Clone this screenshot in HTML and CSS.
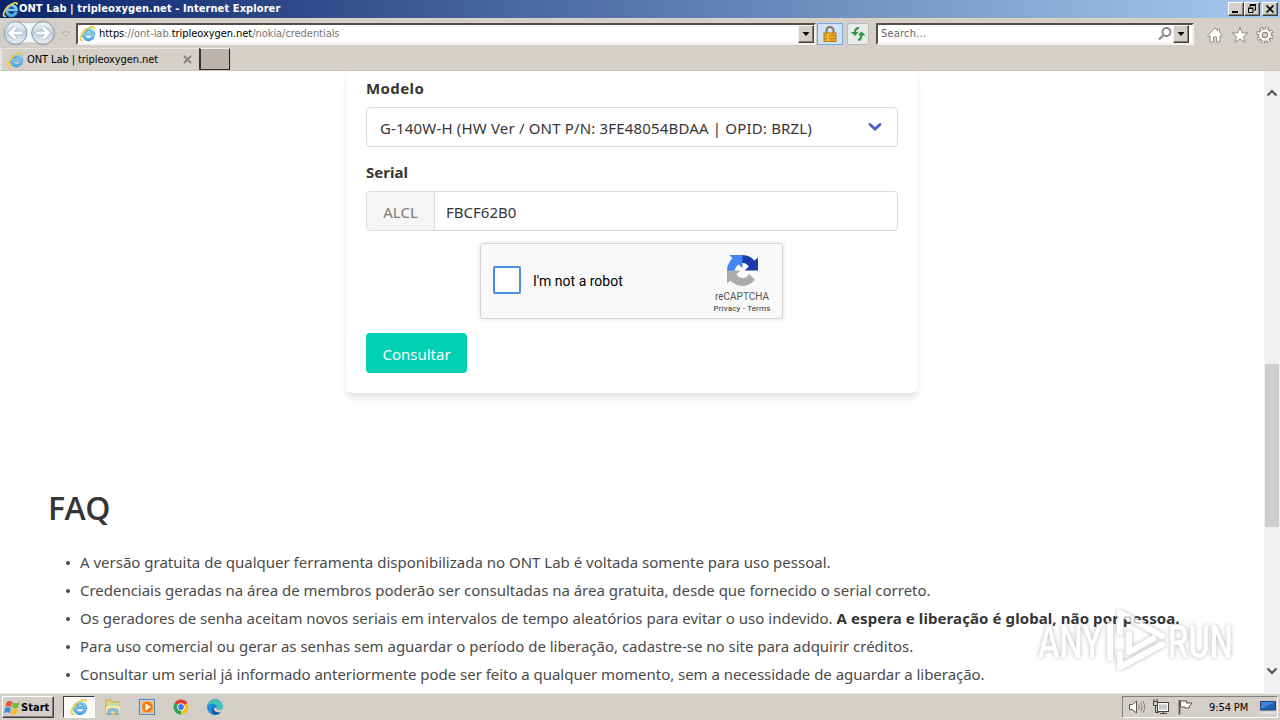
FILE: index.html
```html
<!DOCTYPE html>
<html lang="pt-BR">
<head>
<meta charset="utf-8">
<title>ONT Lab | tripleoxygen.net</title>
<link rel="stylesheet" href="styles.css">
</head>
<body>
<svg class="defs" width="0" height="0" aria-hidden="true">
  <linearGradient id="blue" x1="0" y1="0" x2="0" y2="1"><stop offset="0" stop-color="#8fdcfb"/><stop offset="1" stop-color="#4fb0ea"/></linearGradient>
  <linearGradient id="disc" x1="0" y1="0" x2="0" y2="1"><stop offset="0" stop-color="#f4f7fa"/><stop offset=".5" stop-color="#c3cfdb"/><stop offset="1" stop-color="#e6eff6"/></linearGradient>
  <symbol id="ie" viewBox="0 0 18 18">
    <path d="M15.200 11.800A5.300 5.300 0 1 1 15.400 9.500H6.500" fill="none" stroke="#4a9ad2" stroke-width="3.300"/>
    <path d="M14.900 11.800A5.300 5.300 0 1 1 15.400 9.500H6" fill="none" stroke="url(#blue)" stroke-width="2.200"/>
    <path d="M4 16.200C0 17 1 11.500 5.500 6.700S16.800 0 16 4" fill="none" stroke="#d3a72c" stroke-width="1.700"/>
    <path d="M4 16.200C0 17 1 11.500 5.500 6.700S16.800 0 16 4" fill="none" stroke="#fbdb50" stroke-width="1.200"/>
  </symbol>
</svg>

<header class="titlebar">
  <svg class="title-ie" viewBox="0 0 18 18"><use href="#ie"/></svg>
  <span class="title-text">ONT Lab | tripleoxygen.net - Internet Explorer</span>
  <div class="win-buttons">
    <span class="wb"><svg viewBox="0 0 14 12"><path d="M3 9h6" stroke="#000" stroke-width="2"/></svg></span>
    <span class="wb"><svg viewBox="0 0 14 12"><path d="M5 2.500h5.500V7H9M5 2v2M3.500 9.500h4.500v-4h-4.500zM3 5h5.500" fill="none" stroke="#000"/><path d="M5 1.500h6" stroke="#000"/></svg></span>
    <span class="wb gap"><svg viewBox="0 0 14 12"><path d="M3.500 2.500l7 7M10.500 2.500l-7 7" stroke="#000" stroke-width="1.700"/></svg></span>
  </div>
</header>

<nav class="navbar">
  <svg class="backfwd" width="74" height="29" viewBox="0 0 74 29">
    <path d="M15 1.500Q29 6 43 1.500A12 12 0 0 1 43 26Q29 22 15 26A12 12 0 0 1 15 1.500z" fill="#f5f6f7" stroke="#bdb9b4"/>
    <circle cx="15.500" cy="14" r="11.300" fill="url(#disc)" stroke="#8394a8"/>
    <circle cx="43" cy="14" r="11.300" fill="url(#disc)" stroke="#8394a8"/>
    <path d="M22 14H10.500M15.500 8.500L10 14l5.500 5.500" fill="none" stroke="#9fb0c2" stroke-width="4.400"/>
    <path d="M22 14H10.500M15.500 8.500L10 14l5.500 5.500" fill="none" stroke="#fff" stroke-width="3"/>
    <path d="M36.500 14H48M43 8.500l5.500 5.500-5.500 5.500" fill="none" stroke="#9fb0c2" stroke-width="4.400"/>
    <path d="M36.500 14H48M43 8.500l5.500 5.500-5.500 5.500" fill="none" stroke="#fff" stroke-width="3"/>
    <path d="M62 13h7.500L65.700 17.500z" fill="#e2deda" stroke="#aaa59f"/>
  </svg>
  <div class="address">
    <svg class="ie16" viewBox="0 0 18 18"><use href="#ie"/></svg>
    <span class="url"><b>https</b>://ont-lab.<b>tripleoxygen.net</b>/nokia/credentials</span>
    <span class="drop"><svg viewBox="0 0 14 16"><path d="M3.500 6h7L7 10z"/></svg></span>
  </div>
  <span class="tool lock"><svg viewBox="0 0 24 20"><path d="M8.500 9V6.500a3.500 3.500 0 0 1 7 0V9" fill="none" stroke="#8a7650" stroke-width="2"/><rect x="6" y="9" width="12" height="8.500" fill="#eaa821" stroke="#b87911"/><path d="M6 11.500h12M6 14.500h12" stroke="#c98713"/><path d="M10 9.500v8" stroke="#ffd768"/></svg></span>
  <span class="tool refresh"><svg viewBox="0 0 20 20"><path d="M11 4Q7 4 7 8.500" fill="none" stroke="#299338" stroke-width="2"/><path d="M3 8h7.500L7 12z" fill="#299338"/><path d="M10 16Q13.500 15.500 13.500 11" fill="none" stroke="#299338" stroke-width="2"/><path d="M10 11.500h7.500L13.500 7.500z" fill="#299338"/></svg></span>
  <div class="search">
    <span class="search-text">Search...</span>
    <svg class="magnifier" viewBox="0 0 16 16"><circle cx="9.500" cy="6" r="4" fill="none" stroke="#858585" stroke-width="1.800"/><path d="M6.500 9L2 13.500" stroke="#858585" stroke-width="2.200"/></svg>
    <span class="drop"><svg viewBox="0 0 14 16"><path d="M3.500 6h7L7 10z"/></svg></span>
  </div>
  <div class="nav-icons">
    <svg viewBox="0 0 18 18"><path d="M1.500 9.500L9 2l2.500 2.500V3h2v3.500l3 3-1.300 1L14 9.500V16h-3.500v-5h-3v5H4V9.500l-1.300 1z" fill="#fff" stroke="#908b87"/></svg>
    <svg viewBox="0 0 18 18"><path d="M9 1.300l2.100 5.500 5.900.2-4.600 3.600 1.600 5.700L9 13l-5 3.300 1.600-5.700L1 7l5.900-.2z" fill="#fff" stroke="#908b87"/></svg>
    <svg viewBox="0 0 18 18"><circle cx="9" cy="9" r="6.800" fill="none" stroke="#86817d" stroke-width="3.600" stroke-dasharray="3.440 1.900"/><circle cx="9" cy="9" r="4.500" fill="none" stroke="#86817d" stroke-width="4.400"/><circle cx="9" cy="9" r="6.800" fill="none" stroke="#fff" stroke-width="2" stroke-dasharray="1.800 3.540" stroke-dashoffset="-.8"/><circle cx="9" cy="9" r="4.500" fill="none" stroke="#fff" stroke-width="2.600"/></svg>
  </div>
</nav>

<div class="tabs">
  <div class="tab">
    <svg class="ie16" viewBox="0 0 18 18"><use href="#ie"/></svg>
    <span class="tab-text">ONT Lab | tripleoxygen.net</span>
    <svg class="tab-close" viewBox="0 0 9 9"><path d="M1 1l7 7M8 1L1 8" stroke="#85807c" stroke-width="1.800"/></svg>
  </div>
  <div class="newtab"></div>
</div>

<div class="viewport">
  <main class="page">
    <form class="card">
      <label class="label modelo">Modelo</label>
      <div class="field select">
        <span class="select-text">G-140W-H (HW Ver / ONT P/N: 3FE48054BDAA | OPID: BRZL)</span>
        <svg class="chev" viewBox="0 0 14 10"><path d="M2 2.500l5 4.500 5-4.500" fill="none" stroke="#485fc7" stroke-width="2.800" stroke-linecap="round"/></svg>
      </div>
      <label class="label serial">Serial</label>
      <div class="field addon">
        <span class="prefix">ALCL</span>
        <span class="value">FBCF62B0</span>
      </div>
      <div class="captcha">
        <span class="box"></span>
        <span class="robot">I'm not a robot</span>
        <div class="brand">
          <svg viewBox="0 0 64 64"><path d="M64 31.955a33 33 0 0 0-.033-1.370V4.687l-7.160 7.160C50.948 4.674 42.033.093 32.050.093c-10.400 0-19.622 4.960-25.458 12.640l11.736 11.860a15.550 15.550 0 0 1 4.754-5.334c2.050-1.600 4.952-2.906 8.968-2.906.485 0 .860.057 1.135.163 4.976.393 9.288 3.140 11.828 7.124l-8.307 8.307L64 31.953" fill="#1c3aa9"/><path d="M31.862.094a33 33 0 0 0-1.370.033H4.594l7.160 7.160C4.580 13.147 0 22.060 0 32.046c0 10.400 4.960 19.622 12.640 25.458L24.500 45.768a15.550 15.550 0 0 1-5.334-4.754c-1.600-2.050-2.906-4.952-2.906-8.968 0-.485.057-.860.163-1.135.393-4.976 3.140-9.288 7.124-11.828l8.307 8.307L31.860.095" fill="#4285f4"/><path d="M.001 32.045a33 33 0 0 0 .033 1.370v25.898l7.160-7.160c5.860 7.173 14.774 11.754 24.760 11.754 10.400 0 19.622-4.960 25.458-12.640l-11.736-11.860a15.550 15.550 0 0 1-4.754 5.334c-2.050 1.600-4.952 2.906-8.968 2.906-.485 0-.860-.057-1.135-.163-4.976-.393-9.288-3.140-11.828-7.124l8.307-8.307L0 32.046" fill="#ababab"/></svg>
          <span class="rc-name">reCAPTCHA</span>
          <span class="rc-links">Privacy - Terms</span>
        </div>
      </div>
      <button type="button" class="submit">Consultar</button>
    </form>
    <section class="faq">
      <h1>FAQ</h1>
      <ul>
        <li><span class="l1">A versão gratuita de qualquer ferramenta disponibilizada no ONT Lab é voltada somente para uso pessoal.</span></li>
        <li><span class="l2">Credenciais geradas na área de membros poderão ser consultadas na área gratuita, desde que fornecido o serial correto.</span></li>
        <li><span class="l3">Os geradores de senha aceitam novos seriais em intervalos de tempo aleatórios para evitar o uso indevido. <strong>A espera e liberação é global, não por pessoa.</strong></span></li>
        <li><span class="l4">Para uso comercial ou gerar as senhas sem aguardar o período de liberação, cadastre-se no site para adquirir créditos.</span></li>
        <li><span class="l5">Consultar um serial já informado anteriormente pode ser feito a qualquer momento, sem a necessidade de aguardar a liberação.</span></li>
      </ul>
    </section>
  </main>
  <div class="scrollbar">
    <svg class="up" viewBox="0 0 12 8"><path d="M1.500 6.500L6 2l4.500 4.500" fill="none" stroke="#555" stroke-width="2.200"/></svg>
    <div class="thumb"></div>
    <svg class="down" viewBox="0 0 12 8"><path d="M1.500 1.500L6 6l4.500-4.500" fill="none" stroke="#555" stroke-width="2.200"/></svg>
  </div>
  <svg class="watermark" viewBox="0 0 200 68">
    <text x="2" y="52" textLength="64" lengthAdjust="spacingAndGlyphs">ANY</text>
    <text x="132" y="52" textLength="65" lengthAdjust="spacingAndGlyphs">RUN</text>
    <path d="M74 18v34M84 26V7l42 23M93 28v18l24-13.500M84 48v13l42-22.500" fill="none" stroke="#fff" stroke-width="6" stroke-linejoin="round" stroke-linecap="round"/>
  </svg>
</div>

<footer class="taskbar">
  <div class="start">
    <svg viewBox="0 0 18 18"><path d="M3 3q3-2 6 0L7.500 8.500q-3-2-6 0z" fill="#e8562a"/><path d="M10 3.500q3 2 6.500 0L15 9q-3.500 2-6.500 0z" fill="#79b93c"/><path d="M1.300 9.500q3-2 6 0L6 15q-3-2-6 0z" fill="#3f8fd8"/><path d="M8.300 10q3 2 6.500 0l-1.500 5.500q-3.500 2-6.300 0z" fill="#f7bd2c"/></svg>
    <span>Start</span>
  </div>
  <div class="task-active"><svg viewBox="0 0 18 18"><use href="#ie"/></svg></div>
  <svg class="task" viewBox="0 0 18 18"><path d="M2 2h5l1 2h7v12H2z" fill="#efd27a" stroke="#cda846"/><path d="M4 5h11v4H4z" fill="#bfe0a8"/><path d="M2 8h14v7H2z" fill="#f8e6a0"/><path d="M4 16.500v-5q5-2 10 0v5h-2.500V13h-5v3.500z" fill="#8cc5e6" stroke="#5d9cc4" stroke-width=".7"/></svg>
  <svg class="task" viewBox="0 0 18 18"><rect x="1.500" y="1.500" width="15" height="15" fill="#b7d7ef" stroke="#5686b0"/><rect x="4" y="3" width="11" height="12" fill="#f9b45c"/><circle cx="9.500" cy="9" r="5.300" fill="#f47b12"/><path d="M7.500 5.500v7l5.500-3.500z" fill="#fff"/></svg>
  <svg class="task" viewBox="0 0 18 18"><path d="M9 9L2.500 5.300A7.500 7.500 0 0 1 15.500 5.300z" fill="#e33b2e"/><path d="M9 9l6.500-3.700A7.500 7.500 0 0 1 9 16.500z" fill="#fbc116"/><path d="M9 9v7.500A7.500 7.500 0 0 1 2.500 5.300z" fill="#2ba24c"/><circle cx="9" cy="9" r="3.800" fill="#fff"/><circle cx="9" cy="9" r="2.900" fill="#3b7ded"/></svg>
  <svg class="task" viewBox="0 0 18 18"><circle cx="9" cy="9" r="7.800" fill="#1573c8"/><path d="M1.300 8A7.800 7.800 0 0 1 16.800 9q0 3-3.800 3-3 0-2.500-2.500Q10.500 6 6.500 6 3 6 1.300 8z" fill="#3fc7b4"/><path d="M1.300 8Q3 5.500 7 5.700q4 .5 4 3.800Q8 7.500 6 10q-1 4 4 6.700Q2 17 1.300 8z" fill="#1b8fdf"/><path d="M10.500 9.500Q10 12 13 12q3.800 0 3.800-3l1 4-2.500 2Q9 16 7.500 11.500 8 9 10.500 9.500z" fill="#d4d0c8"/><path d="M7.500 10.500Q8 15 15 14.500 12.500 17 9 16.800 4.500 15.500 7.500 10.500z" fill="#14509c"/></svg>
  <div class="tray">
    <svg viewBox="0 0 18 18"><path d="M1.500 6.500h3L8.500 3v12l-4-3.500h-3z" fill="#fff" stroke="#555"/><path d="M10.500 6.500q2 2.500 0 5M12.700 4.800q3 4.200 0 8.400M14.800 3.200q4 5.800 0 11.600" fill="none" stroke="#777" stroke-width=".9"/></svg>
    <svg viewBox="0 0 18 18"><rect x="5.500" y="4.500" width="11" height="9" fill="#fff" stroke="#444"/><path d="M7 6.500h8v5H7z" fill="#c8c8c8"/><path d="M8 15.500h7M11.500 13.500V16M2 1v3M5 1v3M1.500 3.500h4v4h-4zM3.500 7.500v7H7" fill="none" stroke="#444"/></svg>
    <svg viewBox="0 0 18 18"><path d="M3.500 2v14.500" stroke="#555" stroke-width="1.800"/><path d="M4.500 3h6v2h5.500q-3 2.500-3 5H9V9H4.500z" fill="#fff" stroke="#555"/></svg>
    <span class="clock">9:54 PM</span>
    <svg class="desk" viewBox="0 0 18 18"><path d="M1.500 3.500h15v8.500h-15z" fill="#1e62b8" stroke="#183f78"/><path d="M2 4h14L2 11z" fill="#3f86d8"/><path d="M2 15h14" stroke="#dfe9f3" stroke-width="1.500"/></svg>
  </div>
</footer>
</body>
</html>
```

FILE: styles.css
```css
* { box-sizing: border-box; }
body { margin: 0; width: 1280px; height: 720px; overflow: hidden; display: flex; flex-direction: column; background: #d4d0c8; font-family: "DejaVu Sans Condensed", "DejaVu Sans", sans-serif; font-size: 11px; color: #000; }
svg { display: block; flex: none; }
.defs { position: absolute; }
span { white-space: nowrap; }

.titlebar { height: 18px; flex: none; display: flex; align-items: center; padding: 0 2px 0 2px; background: linear-gradient(90deg, #0a246a, #a6caf0); color: #fff; font-weight: bold; }
.title-ie { width: 17px; height: 17px; }
.title-text { letter-spacing: .09px; line-height: 18px; }
.win-buttons { display: flex; margin-left: auto; }
.wb { width: 16px; height: 14px; background: #d4d0c8; border: 1px solid; border-color: #fff #404040 #404040 #fff; box-shadow: inset -1px -1px #808080; }
.wb svg { width: 14px; height: 12px; }
.gap { margin-left: 2px; }

.navbar { height: 30px; flex: none; display: flex; align-items: center; background: #d5cfca; border-top: 1px solid #d8d4bf; }
.backfwd { margin-right: 2px; }
.address { width: 740px; height: 22px; display: flex; align-items: center; background: #fff; border: 2px solid; border-color: #55504c #f3f1ef #f3f1ef #55504c; }
.ie16 { width: 17px; height: 17px; }
.address .ie16 { margin-left: 1px; }
.url { color: #777; margin-left: 3px; letter-spacing: -.05px; }
.url b { font-weight: normal; color: #000; }
.drop { width: 16px; height: 18px; background: #d4d0c8; border: 1px solid; border-color: #f4f2ee #404040 #404040 #f4f2ee; box-shadow: inset -1px -1px #808080; }
.drop svg { width: 14px; height: 16px; }
.address .drop { margin-left: auto; }
.tool { height: 22px; border: 1px solid #b7b9bb; }
.lock { width: 26px; margin-left: 1px; background: #cfe2f7; border-color: #76a9df; }
.lock svg { width: 24px; height: 20px; }
.refresh { width: 22px; margin-left: 4px; background: #e9eaeb; border-radius: 2px; }
.search { width: 318px; height: 22px; margin-left: 7px; display: flex; align-items: center; background: #fff; border: 2px solid; border-color: #55504c #f3f1ef #f3f1ef #55504c; }
.search-text { color: #666; margin-left: 3px; letter-spacing: .2px; }
.magnifier { width: 16px; height: 16px; margin-left: auto; }
.search .drop { margin-right: 3px; }
.nav-icons { display: flex; gap: 7px; margin-left: 12px; padding-top: 3px; }
.nav-icons svg { width: 18px; height: 18px; }

.tabs { height: 23px; flex: none; display: flex; background: #d5cfca; border-bottom: 1px solid #cbc3bd; }
.tab { width: 198px; display: flex; align-items: center; padding-left: 5px; border-top: 1px solid #e7e3df; border-left: 2px solid #e7e3df; }
.tab-text { margin-left: 3px; letter-spacing: -.08px; }
.tab-close { width: 9px; height: 9px; margin-left: auto; margin-right: 6px; }
.newtab { width: 31px; height: 22px; margin-left: 1px; background: #bab3ae; border: 1px solid; border-width: 1px 1px 1px 2px; border-color: #f2efec #1c1c1c #2c2c2c #333; }

.viewport { position: relative; height: 622px; flex: none; display: flex; background: #fff; overflow: hidden; }
.page { width: 1264px; flex: none; overflow: hidden; font-family: "Noto Sans", sans-serif; color: #363636; font-size: 15px; }
.card { width: 572px; height: 322px; margin-left: 346px; padding: 5px 20px 0; background: #fff; border-radius: 0 0 6px 6px; box-shadow: 0 6px 6px -1px rgba(10,10,10,.1), 0 0 0 1px rgba(10,10,10,.02); }
.label { display: block; height: 24px; line-height: 24px; font-weight: 700; }
.modelo { letter-spacing: .4px; }
.serial { margin-top: 13px; letter-spacing: 0; }
.field { height: 40px; display: flex; align-items: center; border: 1px solid #dbdbdb; border-radius: 4px; margin-top: 7px; line-height: 40px; padding-top: 2px; }
.select { padding-left: 13px; padding-right: 15px; }
.select-text { letter-spacing: .17px; }
.chev { width: 14px; height: 10px; margin: -2px 0 0 auto; }
.addon { padding: 0; }
.prefix { width: 68px; height: 38px; text-align: center; background: #f5f5f5; color: #7a7a7a; border-right: 1px solid #dbdbdb; border-radius: 3px 0 0 3px; }
.value { margin-left: 11px; padding-top: 2px; }
.captcha { width: 303px; height: 76px; margin: 12px 0 0 114px; display: flex; align-items: center; background: #f9f9f9; border: 1px solid #d3d3d3; border-radius: 3px; box-shadow: 0 0 4px 1px rgba(0,0,0,.08); font-family: Roboto, sans-serif; color: #000; }
.box { width: 28px; height: 28px; margin: 0 12px; margin-top: -2px; background: #fff; border: 2px solid #4a90e2; border-radius: 2px; }
.robot { font-size: 14px; }
.brand { width: 70px; margin-left: auto; margin-right: 5px; display: flex; flex-direction: column; align-items: center; color: #555; }
.brand svg { width: 31px; height: 31px; margin-top: 7px; }
.rc-name { font-size: 10px; line-height: 12px; margin-top: 5px; }
.rc-links { font-size: 8px; line-height: 11px; color: #333; letter-spacing: .18px; }
.submit { display: block; width: 101px; height: 40px; margin-top: 14px; padding: 1px 0 0; border: 0; border-radius: 4px; background: #00d1b2; color: #fff; font: 15px "Noto Sans", sans-serif; }
.faq { padding-left: 48px; color: #4a4a4a; }
.faq h1 { margin: 93px 0 0; height: 44px; line-height: 44px; font-size: 32px; font-weight: 600; font-family: "Open Sans", sans-serif; letter-spacing: -.5px; color: #363636; }
.faq ul { margin: 18px 0 0; padding: 0; list-style: none; }
.faq li { height: 28px; line-height: 28px; display: flex; align-items: center; }
.faq li::before { content: ""; width: 4px; height: 4px; margin: 2px 10px 0 18px; border-radius: 50%; background: #4a4a4a; flex: none; }
.faq strong { color: #363636; letter-spacing: .09px; }
.l2 { letter-spacing: -.02px; }
.l4 { letter-spacing: -.015px; }
.l5 { letter-spacing: -.035px; }

.scrollbar { width: 16px; background: #f0f0f0; display: flex; flex-direction: column; align-items: center; }
.up, .down { width: 12px; height: 8px; }
.up { margin-top: 18px; }
.thumb { width: 14px; height: 163px; margin-top: 267px; background: #cdcdcd; }
.down { margin-top: 140px; }

.watermark { position: absolute; left: 1036px; top: 535px; width: 200px; height: 68px; opacity: .75; filter: drop-shadow(0 0 2px rgba(0,0,0,.38)); font: 500 46px Roboto, sans-serif; fill: #fff; }

.taskbar { height: 27px; flex: none; display: flex; align-items: center; padding: 0 2px; border-top: 1px solid #f2f0ec; background: #d4cec8; }
.start { width: 52px; height: 22px; display: flex; align-items: center; gap: 0; padding-left: 1px; font-weight: bold; border: 1px solid; border-color: #fff #404040 #404040 #fff; box-shadow: inset -1px -1px #808080; }
.start svg { width: 17px; height: 17px; }
.start span { letter-spacing: .05px; }
.task-active { width: 32px; height: 22px; margin-left: 9px; padding: 1px 6px; background: #fbfaf8; border: 1px solid; border-color: #404040 #fff #fff #404040; }
.task-active svg { width: 18px; height: 18px; }
.task { width: 18px; height: 18px; margin-left: 16px; }
.task-active + .task { margin-left: 9px; }
.tray { width: 156px; height: 22px; margin-left: auto; display: flex; align-items: center; gap: 6px; padding-left: 5px; border: 1px solid; border-color: #808080 #fff #fff #808080; }
.tray svg { width: 18px; height: 18px; }
.clock { margin-left: 9px; letter-spacing: -.1px; }
.tray .desk { margin-left: 5px; }
```
